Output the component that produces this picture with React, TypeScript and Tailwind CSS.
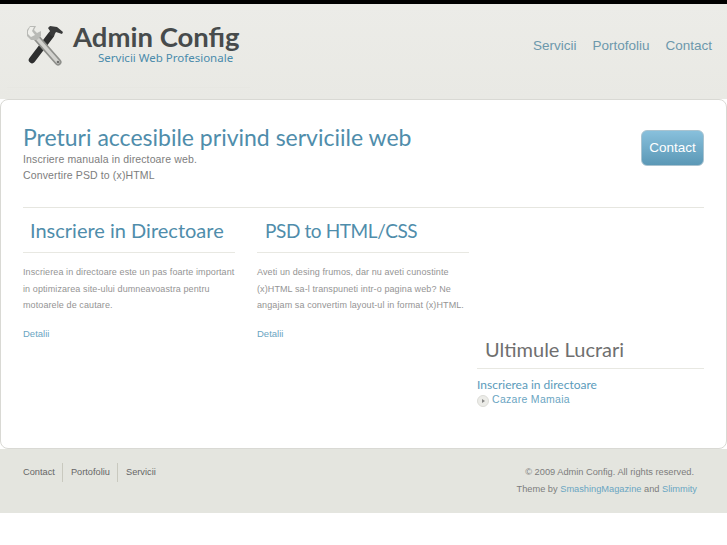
const sans = "font-['Liberation_Sans',Arial,sans-serif]"
const head = "font-['Lato','Noto_Sans',sans-serif]"

function ToolsLogo() {
  return (
    <svg width="38" height="42" viewBox="0 0 38 42" className="shrink-0">
      <path d="M25 10 L6 35" stroke="#2e2f2f" strokeWidth="6.5" strokeLinecap="round" />
      <path d="M22 3 L24 1 L31 2 L37 7 L36 9 L30 7 L27 12 L23 9 L24 6 Z" fill="#3a3b3b" />
      <path d="M10 12 L32 37" stroke="#8f908c" strokeWidth="7" strokeLinecap="round" />
      <path d="M10 12 L32 37" stroke="#d2d2ce" strokeWidth="3.5" strokeLinecap="round" />
      <path d="M4 1 L10 1 L8 5 L11 8 L15 6 L15 11 L11 15 L5 15 L1 11 L1 5 Z" fill="#b9bab6" />
      <path d="M4 2 L8 2 L6 6 L9 10 L5 12 L2 9 L2 6 Z" fill="#efefeb" />
      <circle cx="32" cy="37" r="1.3" fill="#6f706d" />
    </svg>
  )
}

function Column({ title, titleClass, text, className }: { title: string; titleClass: string; text: string[]; className: string }) {
  return (
    <div className={className}>
      <h2 className={`${head} h-[45px] border-b border-[#e8e8e2] leading-[28px] text-[#4f8dab] ${titleClass}`}>{title}</h2>
      <p className="mt-[11px] text-[9px] leading-[16.5px] tracking-[0.1px] text-[#949494]">
        {text.map((line) => (
          <span key={line} className="block whitespace-nowrap">{line}</span>
        ))}
      </p>
      <a className="mt-[12px] block text-[9.5px] leading-[16px] text-[#6aa5c2]">Detalii</a>
    </div>
  )
}

export default function App() {
  return (
    <div className={`${sans} min-h-[545px] bg-white`}>
      <div className="h-[4px] bg-black" />
      <header className="h-[95px] bg-gradient-to-b from-[#ecece8] to-[#e9e9e4]">
        <div className="flex h-[83px] items-start justify-between pl-[26px] pr-[15px] pt-[17px]">
          <div className="flex gap-[9px]">
            <div className="pt-[4px]"><ToolsLogo /></div>
            <div>
              <div className={`${head} mt-[1px] text-[27.5px] font-bold leading-[29px] text-[#474b4c]`}>Admin Config</div>
              <div className="pl-[25px] font-['Noto_Sans',sans-serif] text-[11.5px] leading-[13px] text-[#4a8bab]">Servicii Web Profesionale</div>
            </div>
          </div>
          <nav className="flex gap-[16px] pt-[16px] text-[13.5px] leading-[18px] text-[#6d98ac]">
            <a>Servicii</a>
            <a>Portofoliu</a>
            <a>Contact</a>
          </nav>
        </div>
        <div className="ml-[7px] h-px w-[243px] bg-[#e7e7e2]" />
      </header>

      <main className="h-[350px] rounded-[8px] border border-[#d9d9d4] bg-white pl-[22px] pr-[22px]">
        <div className="flex h-[108px] items-start justify-between border-b border-[#e6e6e0]">
          <div className="pt-[24px]">
            <h1 className={`${head} text-[23px] leading-[27px] text-[#4f8dab]`}>Preturi accesibile privind serviciile web</h1>
            <p className="text-[10.5px] leading-[16px] tracking-[0.13px] text-[#7d7d7d]">Inscriere manuala in directoare web.</p>
            <p className="text-[10.5px] leading-[16px] tracking-[0.13px] text-[#7d7d7d]">Convertire PSD to (x)HTML</p>
          </div>
          <a className="mt-[30px] flex h-[36px] w-[63px] items-center justify-center rounded-[6px] border border-[#a9c3d0] bg-gradient-to-b from-[#88c0dc] to-[#5b98b6] text-[13.5px] text-white">Contact</a>
        </div>

        <div className="flex">
          <Column
            className="w-[212px]"
            titleClass="pl-[7px] pt-[8px] text-[20px]"
            title="Inscriere in Directoare"
            text={["Inscrierea in directoare este un pas foarte important", "in optimizarea site-ului dumneavoastra pentru", "motoarele de cautare."]}
          />
          <Column
            className="ml-[22px] w-[212px]"
            titleClass="pl-[8px] pt-[9px] text-[19px] tracking-[-0.4px]"
            title="PSD to HTML/CSS"
            text={["Aveti un desing frumos, dar nu aveti cunostinte", "(x)HTML sa-l transpuneti intr-o pagina web? Ne", "angajam sa convertim layout-ul in format (x)HTML."]}
          />
          <div className="ml-[8px] w-[227px] pt-[126px]">
            <h2 className={`${head} h-[35px] border-b border-[#e8e8e2] pl-[8px] text-[20px] leading-[30px] text-[#6f6f6f]`}>Ultimule Lucrari</h2>
            <a className={`${head} mt-[8px] block text-[12px] leading-[15px] text-[#5b9bbb]`}>Inscrierea in directoare</a>
            <div className="flex items-start gap-[3px]">
              <svg width="12" height="12" viewBox="0 0 12 12" className="mt-[3px] shrink-0">
                <circle cx="6" cy="6" r="5.5" fill="#ecece8" stroke="#dcdcd7" />
                <path d="M5 4 L8 6 L5 8 Z" fill="#888" />
              </svg>
              <a className="text-[10.5px] leading-[14px] tracking-[0.3px] text-[#6aa5c2]">Cazare Mamaia</a>
            </div>
          </div>
        </div>
      </main>

      <footer className="flex h-[64px] justify-between bg-[#e4e5df] pl-[23px] pr-[30px] text-[9.25px]">
        <nav className="mt-[14px] flex h-[19px] items-center text-[#666]">
          <a className="border-r border-[#c9c9bf] pr-[7px] leading-[19px]">Contact</a>
          <a className="border-r border-[#c9c9bf] pl-[8px] pr-[7px] leading-[19px]">Portofoliu</a>
          <a className="pl-[8px] leading-[19px]">Servicii</a>
        </nav>
        <div className="pt-[15px] text-right leading-[16.5px] text-[#7d7d7d]">
          <p className="pr-[3px]">© 2009 Admin Config. All rights reserved.</p>
          <p>Theme by <a className="text-[#6aa5c2]">SmashingMagazine</a> and <a className="text-[#6aa5c2]">Slimmity</a></p>
        </div>
      </footer>
    </div>
  )
}
